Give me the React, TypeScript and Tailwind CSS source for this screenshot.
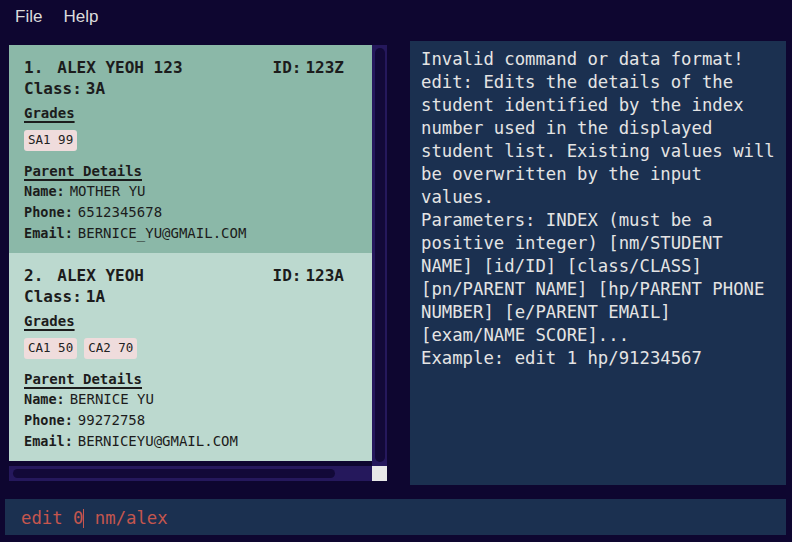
import React from 'react'

const MONO = { fontFamily: '"DejaVu Sans Mono", "Liberation Mono", monospace' }

type Student = {
	index: number
	name: string
	id: string
	cls: string
	grades: { exam: string, score: number }[]
	parentName: string
	phone: string
	email: string
	bg: string
}

const students: Student[] = [
	{
		index: 1, name: 'ALEX YEOH 123', id: '123Z', cls: '3A',
		grades: [{ exam: 'SA1', score: 99 }],
		parentName: 'MOTHER YU', phone: '6512345678', email: 'BERNICE_YU@GMAIL.COM',
		bg: 'bg-[#8bb8a8]',
	},
	{
		index: 2, name: 'ALEX YEOH', id: '123A', cls: '1A',
		grades: [{ exam: 'CA1', score: 50 }, { exam: 'CA2', score: 70 }],
		parentName: 'BERNICE YU', phone: '99272758', email: 'BERNICEYU@GMAIL.COM',
		bg: 'bg-[#bcd9cf]',
	},
]

const resultLines = [
	'Invalid command or data format!',
	'edit: Edits the details of the',
	'student identified by the index',
	'number used in the displayed',
	'student list. Existing values will',
	'be overwritten by the input',
	'values.',
	'Parameters: INDEX (must be a',
	'positive integer) [nm/STUDENT',
	'NAME] [id/ID] [class/CLASS]',
	'[pn/PARENT NAME] [hp/PARENT PHONE',
	'NUMBER] [e/PARENT EMAIL]',
	'[exam/NAME SCORE]...',
	'Example: edit 1 hp/91234567',
]

const StudentCard = ({ s }: { s: Student }) => {
	return (
		<div className={`${s.bg} h-[208px] pt-[12px] pl-[15px] pr-[28px] text-[#1c1c1c] flex flex-col`}>
			<div className="h-[21px] flex items-center text-[16px] font-bold">
				<span>{s.index}.</span>
				<span className="ml-[14px]">{s.name}</span>
				<span className="ml-auto flex gap-[4px]">
					<span>ID:</span>
					<span>{s.id}</span>
				</span>
			</div>
			<div className="h-[21px] flex items-center text-[16px] font-bold gap-[4px]">
				<span>Class:</span>
				<span>{s.cls}</span>
			</div>
			<div className="mt-[4px] h-[20px] flex items-center text-[14px] font-bold underline underline-offset-[3px] decoration-[1.5px]">
				Grades
			</div>
			<div className="mt-[7px] flex gap-[7px]">
				{s.grades.map((g) => (
					<span
						key={g.exam}
						className="h-[21px] px-[4px] flex items-center rounded-[3px] bg-[#efdcdc] text-[12.5px] text-[#222]">
						{g.exam} {g.score}
					</span>
				))}
			</div>
			<div className="mt-[10px] h-[20px] flex items-center text-[14px] font-bold underline underline-offset-[3px] decoration-[1.5px]">
				Parent Details
			</div>
			<div className="h-[21px] flex items-center gap-[5px]">
				<span className="text-[13.5px] font-bold">Name:</span>
				<span className="text-[14px]">{s.parentName}</span>
			</div>
			<div className="h-[21px] flex items-center gap-[5px]">
				<span className="text-[13.5px] font-bold">Phone:</span>
				<span className="text-[14px]">{s.phone}</span>
			</div>
			<div className="h-[21px] flex items-center gap-[5px]">
				<span className="text-[13.5px] font-bold">Email:</span>
				<span className="text-[14px]">{s.email}</span>
			</div>
		</div>
	)
}

const App = () => {
	return (
		<div className="w-[792px] h-[542px] bg-[#0e0630] flex flex-col overflow-hidden" style={MONO}>
			{/* menu bar */}
			<div
				className="h-[33px] pl-[15px] flex items-center gap-[21px] text-[17px] text-[#dcdcdc]"
				style={{ fontFamily: '"Liberation Sans", Arial, sans-serif' }}>
				<span>File</span>
				<span>Help</span>
			</div>

			<div className="h-[466px] flex">
				{/* student list */}
				<div className="ml-[9px] mt-[12px] w-[378px] h-[436px] flex flex-col">
					<div className="flex h-[421px]">
						<div className="w-[363px] flex flex-col">
							{students.map((s) => (
								<StudentCard key={s.index} s={s} />
							))}
						</div>
						<div className="w-[15px] bg-[#25185c] pt-[3px] pb-[4px] flex justify-center">
							<div className="w-[10px] h-full rounded-[5px] bg-[#120938]" />
						</div>
					</div>
					<div className="flex h-[15px]">
						<div className="w-[363px] bg-[#25185c] pl-[4px] py-[3px]">
							<div className="w-[322px] h-full rounded-[5px] bg-[#120938]" />
						</div>
						<div className="w-[15px] bg-[#e8e8e8]" />
					</div>
				</div>

				{/* result display */}
				<div className="ml-[23px] mt-[8px] w-[376px] h-[444px] bg-[#1b3050] pl-[11px] pt-[7px] text-[17.3px] leading-[23px] text-[#e4e4e4]">
					{resultLines.map((line, i) => (
						<div key={i} className="whitespace-pre">{line}</div>
					))}
				</div>
			</div>

			{/* command box */}
			<div className="ml-[5px] w-[781px] h-[36px] bg-[#1b3050] pl-[16px] pt-[3px] flex items-center text-[17.3px] text-[#c4564e]">
				<span className="whitespace-pre">edit 0</span>
				<span className="w-[1px] h-[19px] bg-[#c4564e]" />
				<span className="whitespace-pre"> nm/alex</span>
			</div>
		</div>
	)
}

export default App
